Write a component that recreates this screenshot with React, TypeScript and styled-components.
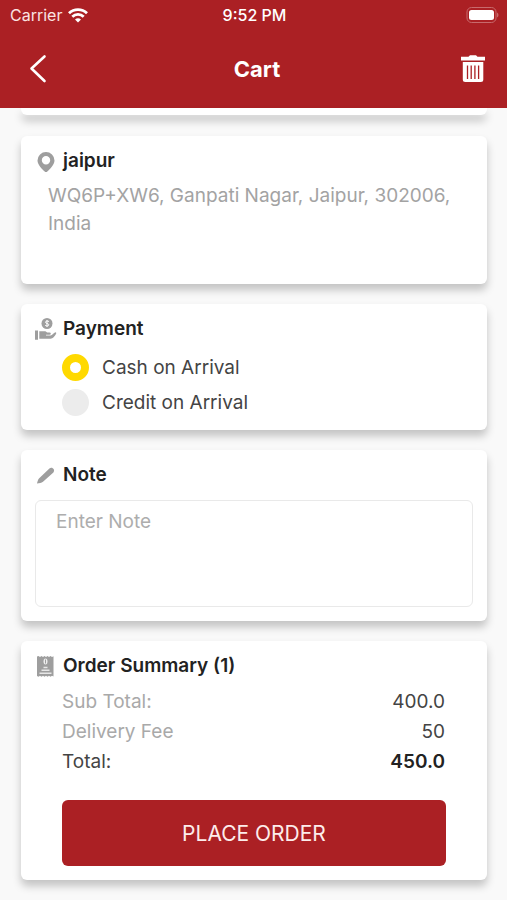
import React, { useState } from "react";
import styled, { createGlobalStyle } from "styled-components";

const GlobalStyle = createGlobalStyle`
  * { box-sizing: border-box; }
  body {
    margin: 0;
    background: #f9f9f9;
    color: #222;
    font-family: Inter, Roboto, "Liberation Sans", sans-serif;
  }
  h1, h2, p, dl, dd, fieldset { margin: 0; padding: 0; border: 0; }
  button, textarea, input { font: inherit; margin: 0; }
`;

const Header = styled.header`
  background: #ab2024;
  color: #fff;
`;

const StatusBar = styled.div`
  display: grid;
  grid-template-columns: 1fr auto 1fr;
  align-items: center;
  height: 30px;
  padding: 0 8px 0 10px;
  font-size: 16px;
`;

const Carrier = styled.span`
  display: flex;
  align-items: center;
  gap: 6px;
  color: #fbe3e2;
`;

const Clock = styled.span`
  font-weight: 500;
`;

const Battery = styled.span`
  display: flex;
  justify-content: flex-end;
`;

const NavBar = styled.nav`
  display: grid;
  grid-template-columns: 1fr auto 1fr;
  align-items: center;
  height: 78px;
  padding: 0 20px 0 27px;
`;

const NavTitle = styled.h1`
  font-size: 22px;
  font-weight: 700;
  line-height: 28px;
`;

const IconButton = styled.button<{ $end?: boolean }>`
  display: flex;
  justify-self: ${({ $end }) => ($end ? "end" : "start")};
  padding: 0;
  border: 0;
  background: none;
  color: inherit;
  cursor: pointer;
`;

const Content = styled.main`
  display: flex;
  flex-direction: column;
  gap: 20px;
  padding: 0 20px 20px 21px;
`;

const Card = styled.section<{ $bottom?: number }>`
  padding: 13px 14px ${({ $bottom = 14 }) => $bottom}px;
  border-radius: 6px;
  background: #fff;
  box-shadow: 0 6px 9px rgba(0, 0, 0, 0.22);
`;

const CardEdge = styled.div`
  height: 7px;
  margin-bottom: 1px;
  border-radius: 0 0 6px 6px;
  background: #fff;
  box-shadow: 0 6px 9px rgba(0, 0, 0, 0.22);
`;

const CardHeading = styled.div`
  display: flex;
  align-items: center;
  gap: 6px;
  color: #9e9e9e;
`;

const CardTitle = styled.h2`
  color: #222;
  font-size: 19px;
  font-weight: 600;
  line-height: 24px;
`;

const Address = styled.p`
  margin: 9px 14px 0 13px;
  color: #a3a3a3;
  font-size: 19px;
  line-height: 28px;
`;

const Options = styled.fieldset`
  display: flex;
  flex-direction: column;
  margin: 9px 0 0 27px;
`;

const Option = styled.label`
  display: flex;
  align-items: center;
  gap: 13px;
  height: 35px;
  color: #444;
  font-size: 19px;
  cursor: pointer;
`;

const Radio = styled.input`
  appearance: none;
  width: 27px;
  height: 27px;
  border-radius: 50%;
  background: #ececec;
  &:checked {
    border: 8px solid #ffd900;
    background: #fff;
  }
`;

const NoteInput = styled.textarea`
  display: block;
  width: 100%;
  height: 107px;
  margin-top: 13px;
  padding: 8px 20px;
  border: 1px solid #e9e9e9;
  border-radius: 6px;
  background: #fff;
  color: #444;
  font-size: 19px;
  line-height: 26px;
  resize: none;
  &::placeholder { color: #adadad; opacity: 1; }
`;

const Totals = styled.dl`
  margin: 9px 28px 0 27px;
`;

const TotalRow = styled.div<{ $strong?: boolean }>`
  display: flex;
  justify-content: space-between;
  font-size: 19px;
  line-height: 30px;
  dt { color: ${({ $strong }) => ($strong ? "#444" : "#a9a9a9")}; }
  dd {
    color: ${({ $strong }) => ($strong ? "#222" : "#444")};
    font-weight: ${({ $strong }) => ($strong ? 600 : 400)};
  }
`;

const ButtonRow = styled.div`
  display: flex;
  padding: 23px 27px 0;
`;

const OrderButton = styled.button`
  flex: 1;
  height: 66px;
  border: 0;
  border-radius: 6px;
  background: #ab2024;
  color: #fdeceb;
  font-size: 21px;
  cursor: pointer;
`;

const WifiIcon = () => (
  <svg width="20" height="15" viewBox="0 0 20 15" fill="none" stroke="#fff" strokeWidth="2.8" aria-hidden="true">
    <path d="M1 5.2a13 13 0 0 1 18 0" />
    <path d="M4.3 8.7a8.2 8.2 0 0 1 11.4 0" />
    <path d="M10 14.6 7 11.6a4.3 4.3 0 0 1 6 0Z" fill="#fff" stroke="none" />
  </svg>
);

const BatteryIcon = () => (
  <svg width="33" height="16" viewBox="0 0 33 16" aria-hidden="true">
    <rect x="1" y="0.5" width="29" height="15" rx="4.500" fill="none" stroke="#c86a6c" />
    <rect x="3" y="3" width="25" height="10" rx="2.500" fill="#fff" />
    <path d="M31 5.500c2 1 2 4 0 5Z" fill="#c86a6c" />
  </svg>
);

const BackIcon = () => (
  <svg width="29" height="30" viewBox="7 0 29 30" fill="none" stroke="#fff" strokeWidth="2.600" strokeLinecap="round" strokeLinejoin="round" aria-hidden="true">
    <path d="M24.500 2.500 11.500 14.500l13 12.500" />
  </svg>
);

const TrashIcon = () => (
  <svg width="28" height="30" viewBox="0 0 28 30" aria-hidden="true">
    <path d="M2 2.800h7.500l1.500-1.500h6l1.500 1.500H26v3.700H2Z" fill="#fff" />
    <path d="M3.800 8h20.500v17.500a2.500 2.500 0 0 1-2.500 2.500H6.300a2.500 2.500 0 0 1-2.500-2.500Z" fill="#fff" />
    <path d="M8.500 11.500v13.500M12.200 11.500v13.500M15.900 11.500v13.500M19.600 11.500v13.500" stroke="#ab2024" strokeWidth="1.300" />
  </svg>
);

const PinIcon = () => (
  <svg width="22" height="22" viewBox="0 0 22 22" fill="currentColor" aria-hidden="true">
    <path fillRule="evenodd" d="M11 2a8.500 8.500 0 0 1 8.500 8.400c0 4.200-4.300 8.200-7.200 11.200a1.800 1.800 0 0 1-2.600 0C6.800 18.600 2.500 14.600 2.500 10.400A8.500 8.500 0 0 1 11 2Zm0 4a4.200 4.200 0 1 0 0 8.400A4.200 4.200 0 0 0 11 6Z" />
  </svg>
);

const PaymentIcon = () => (
  <svg width="22" height="24" viewBox="0 0 22 24" fill="currentColor" aria-hidden="true">
    <circle cx="12" cy="6.500" r="5.500" />
    <path d="M14 4.600c-1-.9-3.500-.8-3.500.6 0 1.700 3.300.9 3.300 2.600 0 1.400-2.600 1.500-3.600.5M12 3v7" fill="none" stroke="#fff" strokeWidth="1" />
    <path d="M0 13.500h3v9.300H0ZM4.300 14.200h5c1.300 0 2 .6 2.800 1.200h2.400c1.800 0 1.700 2.300 0 2.300H11v.8h4.600c1.700 0 3-3 4.800-3.300.9 0 1.100.9.600 1.700-1.500 2.200-3 4.800-5.500 4.800H4.300Z" />
  </svg>
);

const PencilIcon = () => (
  <svg width="22" height="24" viewBox="0 0 22 24" fill="currentColor" aria-hidden="true">
    <path d="M2 20.500c.5-2 .9-4 2.200-5.300L14.400 5.500c2.700-2.300 6.200 1.400 4 3.900L8 18.700C6.500 20 4.300 20.200 2 20.500Z" />
  </svg>
);

const ReceiptIcon = () => (
  <svg width="22" height="24" viewBox="0 0 22 24" aria-hidden="true">
    <path d="M2 2.500 3.500 2 5 3 6.500 2 8 3l1.500-1L11 3l1.500-1L14 3l1.500-1L17 3l1.500-.8v20.300l-1.500-.8-1.500 1-1.500-1-1.500 1-1.500-1-1.500 1-1.500-1-1.500 1-1.500-1-1.500 1L2 22Z" fill="currentColor" />
    <ellipse cx="10.500" cy="7.500" rx="2" ry="3" fill="#eee" />
    <path d="M10.500 5.500v4" stroke="#9e9e9e" />
    <path d="M8.500 13.500h4M6.500 16.300h8M4.500 19.200h12" stroke="#e6e6e6" strokeWidth="1.600" />
  </svg>
);

const paymentMethods = ["Cash on Arrival", "Credit on Arrival"];

export default function App() {
  const [method, setMethod] = useState(paymentMethods[0]);
  const [note, setNote] = useState("");

  return (
    <>
      <GlobalStyle />
      <Header>
        <StatusBar>
          <Carrier>Carrier <WifiIcon /></Carrier>
          <Clock>9:52 PM</Clock>
          <Battery><BatteryIcon /></Battery>
        </StatusBar>
        <NavBar>
          <IconButton aria-label="Back"><BackIcon /></IconButton>
          <NavTitle>Cart</NavTitle>
          <IconButton $end aria-label="Empty cart"><TrashIcon /></IconButton>
        </NavBar>
      </Header>
      <Content>
        <CardEdge />
        <Card $bottom={46}>
          <CardHeading><PinIcon /><CardTitle>jaipur</CardTitle></CardHeading>
          <Address>WQ6P+XW6, Ganpati Nagar, Jaipur, 302006, India</Address>
        </Card>
        <Card $bottom={10}>
          <CardHeading><PaymentIcon /><CardTitle id="payment-title">Payment</CardTitle></CardHeading>
          <Options aria-labelledby="payment-title">
            {paymentMethods.map((name) => (
              <Option key={name}>
                <Radio type="radio" name="payment" checked={method === name} onChange={() => setMethod(name)} />
                {name}
              </Option>
            ))}
          </Options>
        </Card>
        <Card>
          <CardHeading><PencilIcon /><CardTitle id="note-title">Note</CardTitle></CardHeading>
          <NoteInput aria-labelledby="note-title" placeholder="Enter Note" value={note} onChange={(e) => setNote(e.target.value)} />
        </Card>
        <Card>
          <CardHeading><ReceiptIcon /><CardTitle>Order Summary (1)</CardTitle></CardHeading>
          <Totals>
            <TotalRow><dt>Sub Total:</dt><dd>400.0</dd></TotalRow>
            <TotalRow><dt>Delivery Fee</dt><dd>50</dd></TotalRow>
            <TotalRow $strong><dt>Total:</dt><dd>450.0</dd></TotalRow>
          </Totals>
          <ButtonRow><OrderButton>PLACE ORDER</OrderButton></ButtonRow>
        </Card>
      </Content>
    </>
  );
}
